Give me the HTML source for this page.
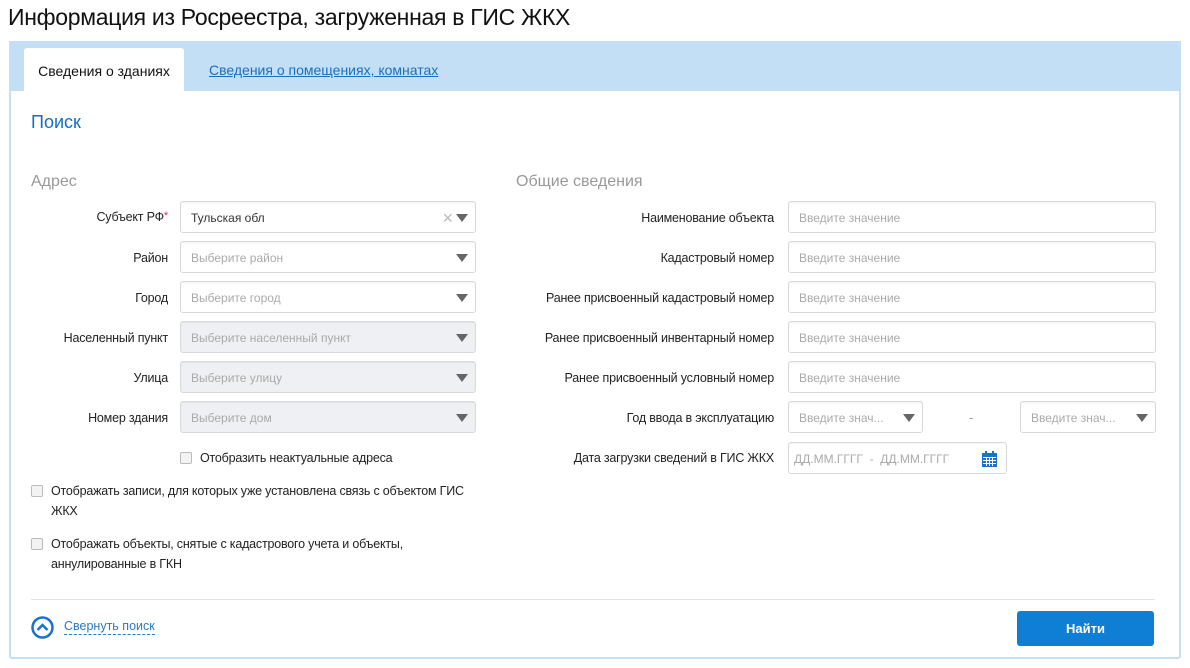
<!DOCTYPE html>
<html><head><meta charset="utf-8"><style>
*{box-sizing:border-box;margin:0;padding:0}
body{width:1190px;height:668px;background:#fff;font-family:"Liberation Sans",sans-serif;color:#222;position:relative;overflow:hidden}
.a{position:absolute}
h1{position:absolute;left:8px;top:4px;font-size:23px;font-weight:normal;color:#111;letter-spacing:-0.3px}
.box{position:absolute;left:9px;top:41px;width:1172px;height:618px;border:2px solid #c5e0f5;border-top:none;border-radius:0 0 3px 3px}
.bar{position:absolute;left:9px;top:41px;width:1172px;height:50px;background:#c3dff5}
.tab{position:absolute;left:24px;top:48px;width:160px;height:43px;background:#fff;border-radius:3px 3px 0 0;font-size:14px;line-height:46px;text-align:center;color:#111}
.lnk{position:absolute;left:209px;top:62px;font-size:14px;color:#1a6fc0;text-decoration:underline}
.lbl{position:absolute;font-size:12.5px;color:#222;text-align:right;letter-spacing:-0.2px}
.inp{position:absolute;height:32px;border:1px solid #d6d9dd;border-radius:3px;background:#fff;font-size:12px;color:#aaa;line-height:32px;padding-left:10px;box-shadow:inset 0 1px 1px rgba(0,0,0,.05)}
.dis{background:#eef0f3}
.arr{position:absolute;right:7px;top:12px;width:0;height:0;border-left:6px solid transparent;border-right:6px solid transparent;border-top:8px solid #666}
.cb{position:absolute;width:12px;height:12px;border:1px solid #bbb;border-radius:2px;background:#f3f3f3}
.ct{position:absolute;font-size:12.5px;color:#222;line-height:20px;letter-spacing:-0.2px}
</style></head><body>
<h1>Информация из Росреестра, загруженная в ГИС ЖКХ</h1>
<div class="bar"></div>
<div class="box"></div>
<div class="tab">Сведения о зданиях</div>
<div class="lnk">Сведения о помещениях, комнатах</div>
<div class="a" style="left:31px;top:112px;font-size:18px;color:#1170c0">Поиск</div>
<div class="a" style="left:31px;top:173px;font-size:16px;color:#999">Адрес</div>
<div class="a" style="left:516px;top:173px;font-size:16px;color:#999">Общие сведения</div>

<div class="lbl" style="right:1022px;top:210px">Субъект РФ<span style="color:#d33;vertical-align:top;font-size:11px">*</span></div>
<div class="inp" style="left:180px;top:201px;width:296px;color:#333">Тульская обл<span class="a" style="right:22px;top:0;color:#bbb;font-size:18px">×</span><div class="arr"></div></div>
<div class="lbl" style="right:1022px;top:251px">Район</div>
<div class="inp" style="left:180px;top:241px;width:296px">Выберите район<div class="arr"></div></div>
<div class="lbl" style="right:1022px;top:291px">Город</div>
<div class="inp" style="left:180px;top:281px;width:296px">Выберите город<div class="arr"></div></div>
<div class="lbl" style="right:1022px;top:331px">Населенный пункт</div>
<div class="inp dis" style="left:180px;top:321px;width:296px">Выберите населенный пункт<div class="arr"></div></div>
<div class="lbl" style="right:1022px;top:371px">Улица</div>
<div class="inp dis" style="left:180px;top:361px;width:296px">Выберите улицу<div class="arr"></div></div>
<div class="lbl" style="right:1022px;top:411px">Номер здания</div>
<div class="inp dis" style="left:180px;top:401px;width:296px">Выберите дом<div class="arr"></div></div>

<div class="cb" style="left:180px;top:452px"></div>
<div class="ct" style="left:200px;top:448px">Отобразить неактуальные адреса</div>
<div class="cb" style="left:31px;top:485px"></div>
<div class="ct" style="left:51px;top:481px;width:440px">Отображать записи, для которых уже установлена связь с объектом ГИС ЖКХ</div>
<div class="cb" style="left:31px;top:538px"></div>
<div class="ct" style="left:51px;top:534px;width:400px">Отображать объекты, снятые с кадастрового учета и объекты, аннулированные в ГКН</div>

<div class="lbl" style="right:416px;top:211px">Наименование объекта</div>
<div class="inp" style="left:788px;top:201px;width:368px">Введите значение</div>
<div class="lbl" style="right:416px;top:251px">Кадастровый номер</div>
<div class="inp" style="left:788px;top:241px;width:368px">Введите значение</div>
<div class="lbl" style="right:416px;top:291px">Ранее присвоенный кадастровый номер</div>
<div class="inp" style="left:788px;top:281px;width:368px">Введите значение</div>
<div class="lbl" style="right:416px;top:331px">Ранее присвоенный инвентарный номер</div>
<div class="inp" style="left:788px;top:321px;width:368px">Введите значение</div>
<div class="lbl" style="right:416px;top:371px">Ранее присвоенный условный номер</div>
<div class="inp" style="left:788px;top:361px;width:368px">Введите значение</div>
<div class="lbl" style="right:416px;top:411px">Год ввода в эксплуатацию</div>
<div class="inp" style="left:788px;top:401px;width:135px">Введите знач...<div class="arr"></div></div>
<div class="a" style="left:969px;top:410px;color:#999;font-size:13px">-</div>
<div class="inp" style="left:1020px;top:401px;width:136px">Введите знач...<div class="arr"></div></div>
<div class="lbl" style="right:416px;top:451px">Дата загрузки сведений в ГИС ЖКХ</div>
<div class="inp" style="left:788px;top:442px;width:219px;padding-left:5px">ДД.ММ.ГГГГ&nbsp; - &nbsp;ДД.ММ.ГГГГ
<svg class="a" style="left:193px;top:8px" width="15" height="16" viewBox="0 0 15 16"><rect x="0" y="2" width="15" height="14" fill="#1a73c9"/><rect x="3" y="0" width="2" height="4" fill="#1a73c9"/><rect x="10" y="0" width="2" height="4" fill="#1a73c9"/><g fill="#fff"><rect x="1" y="6" width="13" height="1"/><rect x="1" y="9" width="13" height="1"/><rect x="1" y="12" width="13" height="1"/><rect x="4" y="6" width="1" height="9"/><rect x="7" y="6" width="1" height="9"/><rect x="10" y="6" width="1" height="9"/></g></svg></div>

<div class="a" style="left:31px;top:599px;width:1124px;height:1px;background:#e3e3e3"></div>
<svg class="a" style="left:31px;top:616px" width="23" height="23" viewBox="0 0 23 23"><circle cx="11.5" cy="11.5" r="10" fill="none" stroke="#1a73c9" stroke-width="2.5"/><path d="M6.5 14 L11.5 9 L16.5 14" fill="none" stroke="#1a73c9" stroke-width="2.5"/></svg>
<div class="a" style="left:64px;top:619px;font-size:12.5px;color:#2a78c4;border-bottom:1px dashed #2a78c4;line-height:15px">Свернуть поиск</div>
<div class="a" style="left:1017px;top:611px;width:137px;height:35px;background:#0f7fd6;border-radius:3px;color:#fff;font-size:13px;font-weight:bold;text-align:center;line-height:35px">Найти</div>
</body></html>
